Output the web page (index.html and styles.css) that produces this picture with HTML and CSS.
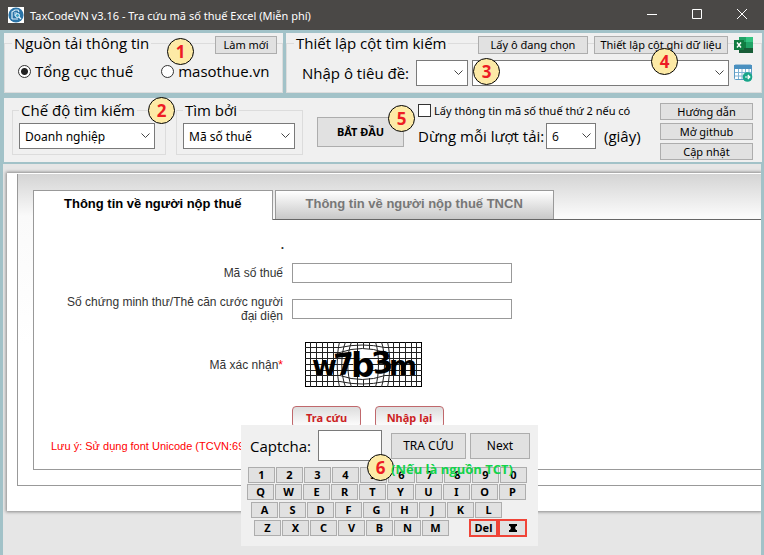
FILE: index.html
```html
<!DOCTYPE html>
<html lang="vi">
<head>
  <meta charset="UTF-8">
  <meta name="viewport" content="width=device-width, initial-scale=1.0">
  <title>TaxCodeVN v3.16 - Tra cứu mã số thuế Excel (Miễn phí)</title>
  <link rel="stylesheet" href="styles.css">
</head>
<body>
  <header class="titlebar">
    <svg class="logo" viewBox="0 0 16 16" aria-hidden="true">
      <rect width="16" height="16" fill="#fff"/>
      <circle cx="8" cy="8" r="7.6" fill="#2b74a8"/>
      <path d="M4 12V5l3-2h3l1 2M4 12h6M6 6h3M6 8h2" fill="none" stroke="#d9eef8" stroke-width="1.2"/>
      <circle cx="9.5" cy="8.5" r="2" fill="#3fa4c8" stroke="#e8f7ff"/>
      <path d="M11 10l2 2" stroke="#e8f7ff" stroke-width="1.3"/>
    </svg>
    <h1>TaxCodeVN v3.16 - Tra cứu mã số thuế Excel (Miễn phí)</h1>
    <div class="window-buttons">
      <button type="button" aria-label="Thu nhỏ"><svg viewBox="0 0 12 12"><path d="M1 6.5h10"/></svg></button>
      <button type="button" aria-label="Phóng to"><svg viewBox="0 0 12 12"><path d="M1.500 1.500h9v9h-9z"/></svg></button>
      <button type="button" aria-label="Đóng"><svg viewBox="0 0 12 12"><path d="M1 1l10 10M11 1L1 11"/></svg></button>
    </div>
  </header>

  <main class="window">
    <div class="top-row">
      <section class="panel source">
        <fieldset>
          <legend>Nguồn tải thông tin</legend>
          <div class="radios">
            <label><input type="radio" name="nguon" checked>Tổng cục thuế</label>
            <label><input type="radio" name="nguon">masothue.vn</label>
          </div>
        </fieldset>
        <div class="tools"><button type="button" class="btn refresh">Làm mới</button></div>
        <span class="badge badge-1">1</span>
      </section>

      <section class="panel columns">
        <fieldset>
          <legend>Thiết lập cột tìm kiếm</legend>
          <div class="header-cell">
            <label for="cot">Nhập ô tiêu đề:</label>
            <select id="cot" class="combo col"><option></option></select>
            <select class="combo title-cell" aria-label="Ô tiêu đề"><option></option></select>
            <button type="button" class="icon-btn" aria-label="Xuất bảng">
              <svg viewBox="0 0 19 18">
                <rect x="0.5" y="1" width="17" height="14.500" rx="1" fill="#fff" stroke="#5b9bc4"/>
                <path d="M0 1h18v4H0z" fill="#4a90c0"/>
                <path d="M1 8.500h16M1 12h16M4.500 5v10M8 5v10M11.500 5v10M15 5v10" stroke="#7fb3d5" fill="none"/>
                <circle cx="13.500" cy="13" r="4.800" fill="#17a589"/>
                <path d="M11 13h4.500M13.800 11l2 2-2 2" stroke="#fff" stroke-width="1.200" fill="none"/>
              </svg>
            </button>
          </div>
        </fieldset>
        <div class="tools">
          <button type="button" class="btn pick">Lấy ô đang chọn</button>
          <button type="button" class="btn setup">Thiết lập cột ghi dữ liệu</button>
          <button type="button" class="icon-btn" aria-label="Excel">
            <svg viewBox="0 0 19 18">
              <path d="M5 1h7v5H5z" fill="#21a366"/>
              <path d="M12 1h7v5h-7z" fill="#33c481"/>
              <path d="M5 6h7v6H5z" fill="#107c41"/>
              <path d="M12 6h7v6h-7z" fill="#21a366"/>
              <path d="M5 12h14v5H5z" fill="#185c37"/>
              <rect x="0" y="4" width="10" height="10" fill="#107c41"/>
              <path d="M3 6.500l4 5M7 6.500l-4 5" stroke="#fff" stroke-width="1.400"/>
            </svg>
          </button>
        </div>
        <span class="badge badge-3">3</span>
        <span class="badge badge-4">4</span>
      </section>
    </div>

    <section class="panel options">
      <fieldset class="mode">
        <legend>Chế độ tìm kiếm</legend>
        <select class="combo" aria-label="Chế độ tìm kiếm"><option>Doanh nghiệp</option></select>
      </fieldset>
      <fieldset class="by">
        <legend>Tìm bởi</legend>
        <select class="combo" aria-label="Tìm bởi"><option>Mã số thuế</option></select>
      </fieldset>
      <button type="button" class="btn start">BẮT ĐẦU</button>
      <div class="extra">
        <label class="second"><input type="checkbox">Lấy thông tin mã số thuế thứ 2 nếu có</label>
        <div class="pause">
          <label for="giay">Dừng mỗi lượt tải:</label>
          <select id="giay" class="combo"><option>6</option></select>
          <span>(giây)</span>
        </div>
      </div>
      <div class="links">
        <button type="button" class="btn">Hướng dẫn</button>
        <button type="button" class="btn">Mở github</button>
        <button type="button" class="btn">Cập nhật</button>
      </div>
      <span class="badge badge-2">2</span>
      <span class="badge badge-5">5</span>
    </section>

    <section class="browser">
      <div class="sheet">
        <div class="frame">
          <nav class="tabs">
            <a href="#" class="tab active">Thông tin về người nộp thuế</a>
            <a href="#" class="tab">Thông tin về người nộp thuế TNCN</a>
          </nav>
          <form class="lookup">
            <div class="dot">.</div>
            <div class="field">
              <label for="mst">Mã số thuế</label>
              <input type="text" id="mst">
            </div>
            <div class="field">
              <label for="cmt">Số chứng minh thư/Thẻ căn cước người đại diện</label>
              <input type="text" id="cmt">
            </div>
            <div class="field code">
              <span class="name">Mã xác nhận<b>*</b></span>
              <svg class="captcha" viewBox="0 0 117 45" role="img" aria-label="w7b3m">
                <rect x="0.500" y="0.500" width="116" height="44" fill="#fff" stroke="#000"/>
                <path d="M5.500 0v45M11.500 0v45M17.500 0v45M22.500 0v45M28.500 0v45M34.500 0c-3 12-3 32 0 45M40.500 0c-5 12-5 32 0 45M46.500 0c-5 12-5 32 0 45M70.500 0c4 12 4 32 0 45M76.500 0c4 12 4 32 0 45M82.500 0c3 12 3 32 0 45M88.500 0v45M94.500 0v45M100.500 0v45M106.500 0v45M111.500 0v45M52.500 0v9M58.500 0v6M64.500 0v7M52.500 35v10M58.500 38v7M64.500 36v9" fill="none" stroke="#222"/>
                <path d="M0 5.500h35q22-5 45 0h37M0 10.500h35q22-8 45 0h37M0 16.500h117M0 22.500h117M0 28.500h117M0 33.500h35q22 8 45 0h37M0 39.500h35q22 5 45 0h37" fill="none" stroke="#222"/>
                <ellipse cx="57" cy="24" rx="9" ry="8" fill="#fff"/>
                <g class="captcha-text">
                  <text x="7" y="33" class="small">w</text>
                  <text x="29" y="33" transform="rotate(-7 36 22)">7</text>
                  <text x="46" y="35" class="wide">b</text>
                  <text x="67" y="31" transform="rotate(-8 76 20)">3</text>
                  <text x="84" y="33" class="small">m</text>
                </g>
              </svg>
            </div>
            <div class="actions">
              <button type="button">Tra cứu</button>
              <button type="button">Nhập lại</button>
            </div>
            <p class="note">Lưu ý: Sử dụng font Unicode (TCVN:6909)</p>
          </form>
        </div>
      </div>

      <div class="keypad">
        <div class="entry">
          <label for="captcha">Captcha:</label>
          <input type="text" id="captcha">
          <button type="button" class="btn search">TRA CỨU</button>
          <button type="button" class="btn next">Next</button>
        </div>
        <div class="keys digits">
          <button type="button">1</button><button type="button">2</button><button type="button">3</button><button type="button">4</button><button type="button">5</button><button type="button">6</button><button type="button">7</button><button type="button">8</button><button type="button">9</button><button type="button">0</button>
        </div>
        <div class="keys row-q">
          <button type="button">Q</button><button type="button">W</button><button type="button">E</button><button type="button">R</button><button type="button">T</button><button type="button">Y</button><button type="button">U</button><button type="button">I</button><button type="button">O</button><button type="button">P</button>
        </div>
        <div class="keys row-a">
          <button type="button">A</button><button type="button">S</button><button type="button">D</button><button type="button">F</button><button type="button">G</button><button type="button">H</button><button type="button">J</button><button type="button">K</button><button type="button">L</button>
        </div>
        <div class="keys row-z">
          <button type="button">Z</button><button type="button">X</button><button type="button">C</button><button type="button">V</button><button type="button">B</button><button type="button">N</button><button type="button">M</button>
          <div class="erase">
            <button type="button">Del</button><button type="button" aria-label="Xóa hết"><svg viewBox="0 0 8 8"><path d="M0 0h8v2H7L6 4l1 2h1v2H0V6h1l1-2-1-2H0z"/></svg></button>
          </div>
        </div>
        <span class="badge badge-6">6</span>
        <span class="hint">(Nếu là nguồn TCT)</span>
      </div>
    </section>
  </main>
</body>
</html>
```
FILE: styles.css
```css
* {
  box-sizing: border-box;
}
body {
  margin: 0;
  min-height: 100vh;
  display: flex;
  flex-direction: column;
  overflow: hidden;
  font-family: "Noto Sans", "Open Sans", sans-serif;
  font-size: 11px;
  color: #000;
  background: #a2c2c8;
}
button, input, select {
  font-family: inherit;
  font-size: inherit;
  color: inherit;
  margin: 0;
  padding: 0;
  border-radius: 0;
}

/* Title bar */
.titlebar {
  display: flex;
  align-items: center;
  height: 30px;
  padding-left: 8px;
  gap: 6px;
  background: #4a4846;
  color: #fff;
}
.logo {
  width: 16px;
  height: 16px;
}
.titlebar h1 {
  flex: 1;
  margin: 0;
  font-size: 11px;
  font-weight: normal;
}
.window-buttons {
  display: flex;
}
.window-buttons button {
  width: 45px;
  height: 28px;
  border: none;
  background: none;
}
.window-buttons svg {
  width: 12px;
  height: 12px;
  fill: none;
  stroke: #fff;
}

/* Panels */
.window {
  flex: 1;
  display: flex;
  flex-direction: column;
  padding: 3px 2px 0 4px;
}
.top-row {
  display: flex;
  gap: 3px;
  margin-bottom: 5px;
}
.panel {
  position: relative;
  background: #f0f0f0;
}
.source {
  width: 279px;
}
.columns {
  flex: 1;
}
fieldset {
  margin: 0;
  min-width: 0;
  border: 1px solid #dcdcdc;
}
legend {
  height: 20px;
  padding: 0 2px;
  font-family: "Open Sans", sans-serif;
  font-size: 15px;
  line-height: 20px;
}
.top-row fieldset {
  height: 60px;
  padding: 7px 8px 0 7px;
}
.radios {
  display: flex;
  align-items: center;
  gap: 28px;
  padding: 0 6px;
  font-family: "Open Sans", sans-serif;
  font-size: 15px;
  line-height: 22px;
  white-space: nowrap;
}
.radios label {
  display: flex;
  align-items: center;
  gap: 4px;
}
.radios input {
  appearance: none;
  width: 13px;
  height: 13px;
  border: 1px solid #333;
  border-radius: 50%;
  background: #fff;
}
.radios input:checked {
  background: radial-gradient(circle, #222 3px, #fff 4px);
}
.tools {
  position: absolute;
  top: 3px;
  right: 9px;
  display: flex;
  align-items: center;
  gap: 6px;
}
.source .tools {
  right: 6px;
}
.btn {
  height: 18px;
  border: 1px solid #adadad;
  background: #e1e1e1;
  white-space: nowrap;
  line-height: 14px;
}
.refresh {
  width: 62px;
}
.pick {
  width: 110px;
}
.setup {
  width: 134px;
}
.icon-btn {
  display: flex;
  border: none;
  background: none;
}
.icon-btn svg {
  width: 19px;
  height: 18px;
}
.header-cell {
  display: flex;
  align-items: center;
  gap: 4px;
}
.header-cell label {
  width: 118px;
  font-family: "Open Sans", sans-serif;
  font-size: 15px;
  padding-left: 8px;
  white-space: nowrap;
}
.header-cell .icon-btn {
  margin-left: 1px;
}
.combo {
  appearance: none;
  height: 26px;
  padding: 0 20px 0 5px;
  border: 1px solid #7a7a7a;
  background: #fff url("data:image/svg+xml,%3Csvg xmlns='http://www.w3.org/2000/svg' width='9' height='6'%3E%3Cpath d='M0.5 0.5l4 4 4-4' fill='none' stroke='%23444'/%3E%3C/svg%3E") no-repeat right 4px center;
  font-size: 12px;
}
.col {
  width: 52px;
}
.title-cell {
  flex: 1;
  min-width: 0;
}

/* Search options */
.options {
  display: flex;
  align-items: flex-start;
  height: 64px;
  padding: 2px 9px 0 8px;
}
.options fieldset {
  height: 55px;
  padding: 3px 6px 0 6px;
}
.mode {
  width: 154px;
}
.by {
  width: 127px;
  margin-left: 10px;
}
.options fieldset .combo {
  display: block;
  width: 100%;
}
.mode .combo {
  max-width: 136px;
}
.by .combo {
  max-width: 112px;
}
.start {
  width: 87px;
  height: 30px;
  margin: 17px 0 0 14px;
  font-weight: bold;
}
.extra {
  flex: 1;
  margin: 3px 0 0 14px;
}
.second {
  display: flex;
  align-items: center;
  gap: 3px;
  height: 14px;
  white-space: nowrap;
}
.second input {
  appearance: none;
  width: 13px;
  height: 13px;
  border: 1px solid #333;
  background: #fff;
}
.pause {
  display: flex;
  align-items: center;
  margin-top: 6px;
  font-family: "Open Sans", sans-serif;
  font-size: 15px;
  white-space: nowrap;
}
.pause label {
  width: 128px;
}
.pause .combo {
  width: 50px;
  margin-right: 8px;
}
.links {
  display: flex;
  flex-direction: column;
  gap: 3px;
  width: 93px;
  padding-top: 3px;
}
.links .btn {
  height: 17px;
}

/* Numbered markers */
.badge {
  position: absolute;
  width: 27px;
  height: 27px;
  border: 1px solid #000;
  border-radius: 50%;
  background: #fdeaa6;
  color: #ed1c24;
  font-size: 17px;
  font-weight: bold;
  line-height: 25px;
  text-align: center;
}
.badge-1 { left: 163px; top: 5px; }
.badge-2 { left: 144px; top: -1px; }
.badge-3 { left: 187px; top: 25px; }
.badge-4 { left: 365px; top: 15px; }
.badge-5 { left: 384px; top: 7px; }
.badge-6 { left: 126px; top: 29px; }

/* Web page area */
.browser {
  position: relative;
  flex: 1;
  margin: 2px 1px 0 -1px;
  padding: 9px 0 0 4px;
  background: #e6e6e6;
  overflow: hidden;
  font-family: "Liberation Sans", Arial, sans-serif;
  font-size: 12px;
}
.sheet {
  padding: 1px 0 25px 10px;
  background: #fff;
  box-shadow: 0 0 3px 1px #888;
}
.frame {
  padding: 16px 0 15px 15px;
  border: 1px solid #999;
  border-width: 0 0 1px 1px;
  background: linear-gradient(#d4d4d4, #fafafa 42px, #fff 170px);
}
.tabs {
  display: flex;
  border-bottom: 1px solid #666;
}
.tab {
  height: 29px;
  padding: 0 30px;
  border: 1px solid #999;
  border-bottom: none;
  background: linear-gradient(#fff, #c8c8c8);
  color: #777;
  font-size: 13px;
  font-weight: bold;
  line-height: 26px;
  text-decoration: none;
}
.tab.active {
  height: 30px;
  margin: 0 2px -1px 0;
  background: #fff;
  color: #000;
}
.lookup {
  padding: 17px 0 15px 17px;
  border: 1px solid #999;
  border-width: 0 0 1px 1px;
  background: #fff;
  color: #333;
}
.dot {
  width: 233px;
  height: 18px;
  line-height: 16px;
  text-align: right;
  font-weight: bold;
}
.field {
  display: flex;
  align-items: center;
  height: 36px;
}
.field label, .name {
  width: 232px;
  padding-left: 14px;
  line-height: 14px;
  text-align: right;
}
.field input {
  width: 220px;
  height: 20px;
  margin-left: 9px;
  border: 1px solid #999;
  background: #fff;
}
.field.code {
  height: 75px;
}
.name b {
  color: #f00;
  font-weight: normal;
}
.captcha {
  width: 117px;
  height: 45px;
  margin-left: 22px;
}
.captcha-text {
  font-family: "DejaVu Sans", sans-serif;
  font-size: 30px;
  font-weight: bold;
}
.captcha-text .small {
  font-size: 27px;
}
.captcha-text .wide {
  font-size: 33px;
}
.actions {
  display: flex;
  gap: 14px;
  margin: 4px 0 0 241px;
}
.actions button {
  width: 69px;
  height: 22px;
  border: 1px solid #c0686c;
  border-radius: 4px;
  background: linear-gradient(#ddd, #fff);
  color: #cc1f24;
  font-family: "Noto Sans", sans-serif;
  font-size: 11px;
  font-weight: bold;
}
.note {
  margin: 11px 0 0;
  color: #f00;
  font-size: 11px;
  line-height: 15px;
}

/* On-screen keyboard */
.keypad {
  position: absolute;
  left: 238px;
  top: 261px;
  width: 297px;
  padding: 5px 6px 9px;
  background: #f0f0f0;
  font-family: "Noto Sans", "Open Sans", sans-serif;
}
.entry {
  display: flex;
  align-items: center;
  margin-bottom: 6px;
}
.entry label {
  width: 71px;
  padding-left: 3px;
  font-family: "Open Sans", sans-serif;
  font-size: 15px;
}
.entry input {
  width: 64px;
  height: 31px;
  border: 1px solid #7a7a7a;
}
.entry .btn {
  height: 26px;
}
.search {
  width: 75px;
  margin: 0 4px 0 9px;
}
.next {
  width: 60px;
}
.keys {
  display: flex;
  gap: 1px;
  margin-bottom: 2px;
}
.keys button {
  width: 27px;
  height: 16px;
  border: 1px solid #adadad;
  background: #e1e1e1;
  font-size: 11px;
  font-weight: bold;
  line-height: 14px;
}
.digits { padding-left: 1px; margin-bottom: 1px; }
.row-a { padding-left: 4px; margin-bottom: 1px; }
.row-z { padding-left: 7px; margin-bottom: 0; align-items: center; }
.keys .erase {
  display: flex;
  margin-left: 19px;
}
.keys .erase button {
  width: 29px;
  height: 18px;
  border: 2px solid #f04438;
}
.erase svg {
  width: 8px;
  height: 8px;
}
.hint {
  position: absolute;
  left: 150px;
  top: 35px;
  color: #12d34b;
  font-family: "Open Sans", sans-serif;
  font-size: 13px;
  font-weight: bold;
  line-height: 18px;
  white-space: nowrap;
}
```
